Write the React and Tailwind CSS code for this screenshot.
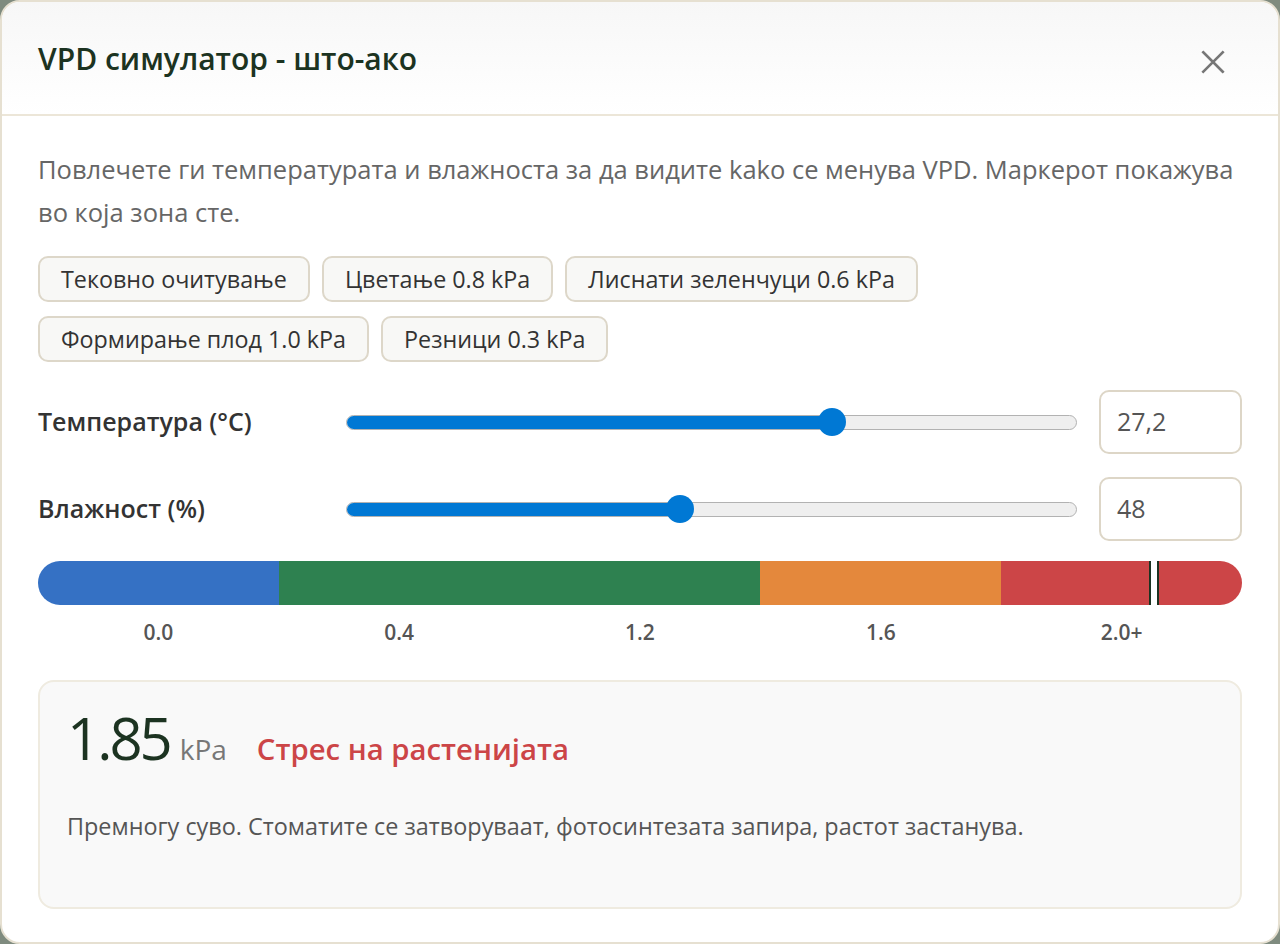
import React, { useState } from 'react';

const presets = [
  'Тековно очитување',
  'Цветање 0.8 kPa',
  'Лиснати зеленчуци 0.6 kPa',
  'Формирање плод 1.0 kPa',
  'Резници 0.3 kPa',
];

const zones = [
  { label: '0.0', color: 'bg-[#3571c4]' },
  { label: '0.4', color: 'bg-[#2e8150]' },
  { label: '1.2', color: 'bg-[#2e8150]' },
  { label: '1.6', color: 'bg-[#e4883c]' },
  { label: '2.0+', color: 'bg-[#cc4547]' },
];

function Slider({ fraction }) {
  const pct = `${fraction * 100}%`;
  return (
    <div className="relative flex-1 h-[30px] flex items-center">
      <div className="relative w-full h-[15px] rounded-full bg-[#efefef] border border-[#b2b2b2] overflow-hidden">
        <div className="h-full bg-[#0078d4]" style={{ width: pct }}></div>
      </div>
      <div
        className="absolute top-[1px] w-[28px] h-[28px] -ml-[14px] rounded-full bg-[#0078d4]"
        style={{ left: pct }}
      ></div>
    </div>
  );
}

function Row({ label, fraction, value }) {
  return (
    <div className="flex items-center">
      <div className="w-[308px] text-[25px] font-semibold text-[#333]">{label}</div>
      <Slider fraction={fraction} />
      <div className="ml-[22px] w-[143px] h-[64px] rounded-[10px] border-2 border-[#ddd6c7] bg-white flex items-center px-[16px] text-[25px] text-[#555]">
        {value}
      </div>
    </div>
  );
}

export default function App() {
  const [active, setActive] = useState(null);

  return (
    <div className="min-h-screen bg-[#7f8b7f]" style={{ fontFamily: '"Open Sans", "Noto Sans", sans-serif' }}>
      <div className="h-[944px] rounded-[20px] border-2 border-[#e6e0d1] bg-white overflow-hidden flex flex-col">
        {/* Header */}
        <div className="h-[114px] shrink-0 flex items-center justify-between pl-[36px] pr-[52px] bg-gradient-to-b from-[#f7f7f7] to-white border-b-2 border-[#ece6d8]">
          <h2 className="text-[30px] font-semibold text-[#1c3321]">VPD симулатор - што-ако</h2>
          <button className="text-[#777] mt-[8px]">
            <svg width="26" height="26" viewBox="0 0 24 24" fill="none" stroke="currentColor" strokeWidth="2.4" strokeLinecap="square">
              <path d="M3 3l18 18M21 3L3 21" />
            </svg>
          </button>
        </div>

        {/* Body */}
        <div className="px-[36px] pt-[32px] flex flex-col">
          <p className="text-[25.5px] leading-[43px] text-[#666]">
            Повлечете ги температурата и влажноста за да видите kako се менува VPD. Маркерот покажува во која зона сте.
          </p>

          <div className="mt-[22px] flex flex-wrap gap-x-[12px] gap-y-[14px]">
            {presets.map((p) => (
              <button
                key={p}
                onClick={() => setActive(p)}
                className={`h-[46px] px-[21px] rounded-[10px] border-2 text-[23.3px] text-[#333] ${active === p ? 'border-[#2e8150] bg-[#eef5ef]' : 'border-[#ddd7c9] bg-[#f8f8f6]'}`}
              >
                {p}
              </button>
            ))}
          </div>

          <div className="mt-[28px] flex flex-col gap-[23px]">
            <Row label="Температура (°C)" fraction={0.665} value="27,2" />
            <Row label="Влажност (%)" fraction={0.457} value="48" />
          </div>

          {/* Zone bar */}
          <div className="mt-[20px] relative">
            <div className="flex h-[44px] rounded-full overflow-hidden">
              {zones.map((z) => (
                <div key={z.label} className={`flex-1 ${z.color}`}></div>
              ))}
            </div>
            <div className="absolute top-0 h-[44px] left-[1111px] w-[10px] bg-white border-x-2 border-[#1c3321]"></div>
          </div>
          <div className="flex mt-[12px]">
            {zones.map((z) => (
              <div key={z.label} className="flex-1 text-center text-[21px] font-semibold text-[#555]">{z.label}</div>
            ))}
          </div>

          {/* Result card */}
          <div className="mt-[31px] h-[229px] rounded-[16px] border-2 border-[#efebe0] bg-[#f9f9f9] px-[27px] pt-[20px]">
            <div className="flex items-baseline">
              <span className="text-[58px] leading-[72px] font-medium tracking-[-3px] text-[#1c3321]">1.85</span>
              <span className="ml-[10px] text-[28px] text-[#777]">kPa</span>
              <span className="ml-[30px] text-[29.3px] font-semibold text-[#cc4547]">Стрес на растенијата</span>
            </div>
            <p className="mt-[35px] text-[23.4px] text-[#555]">
              Премногу суво. Стоматите се затворуваат, фотосинтезата запира, растот застанува.
            </p>
          </div>
        </div>
      </div>
    </div>
  );
}
